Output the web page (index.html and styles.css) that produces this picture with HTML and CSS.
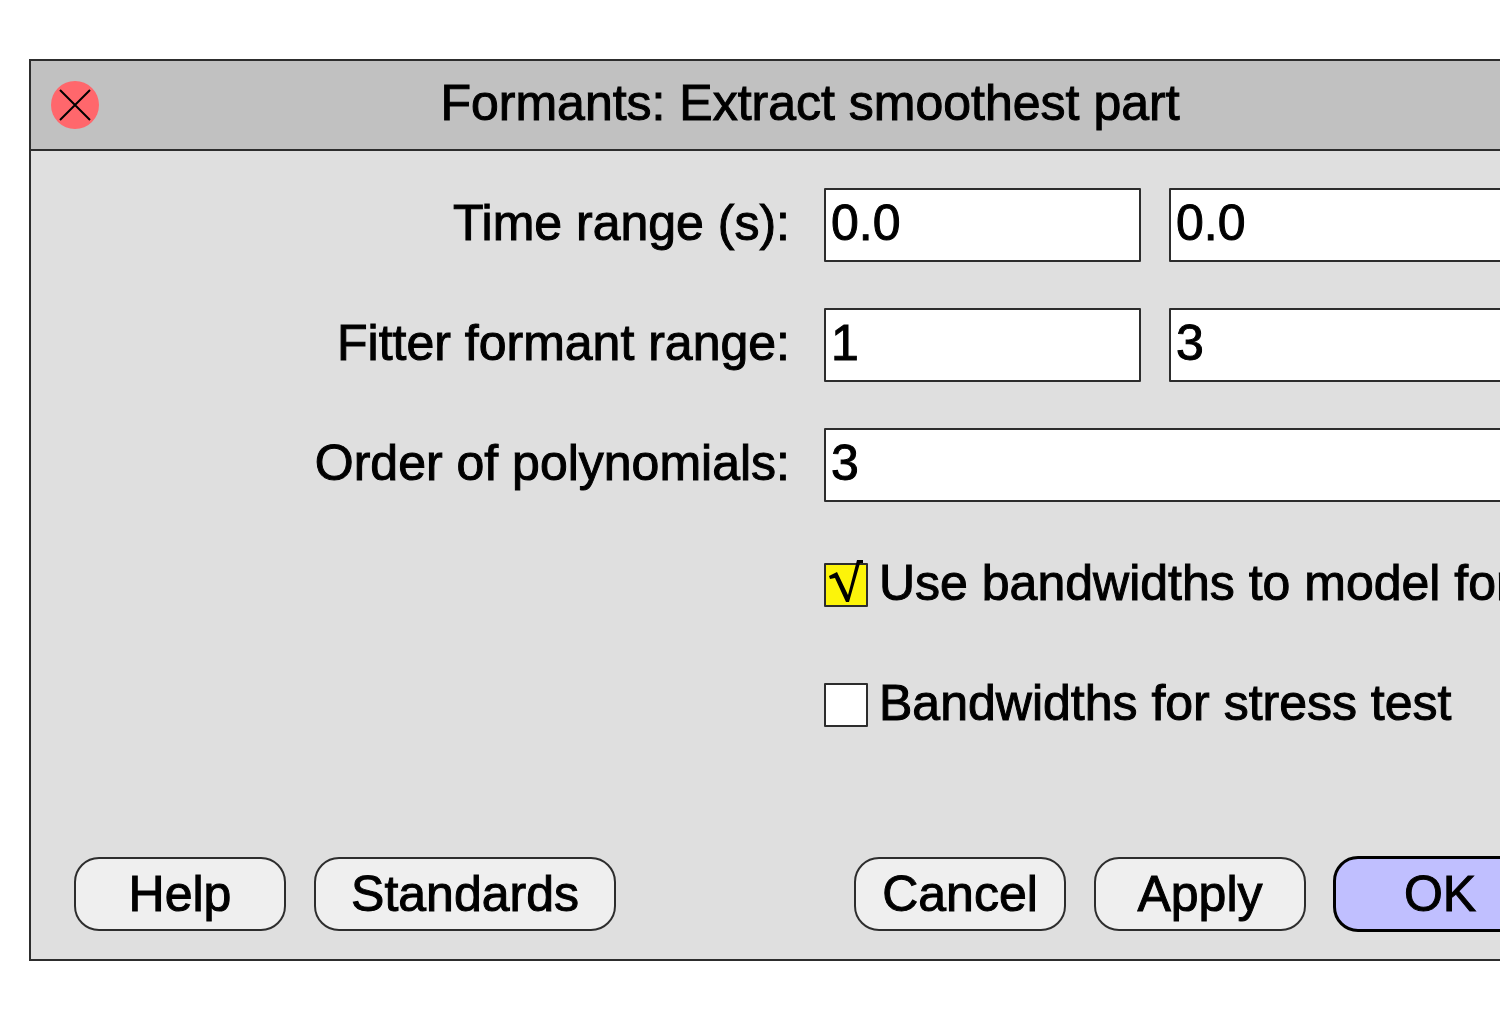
FILE: index.html
```html
<!DOCTYPE html>
<html lang="en">
<head>
<meta charset="utf-8">
<title>Formants: Extract smoothest part</title>
<link rel="stylesheet" href="styles.css">
</head>
<body>
<form class="dialog" aria-labelledby="dialog-title">
  <header class="titlebar">
    <button class="close" type="button" aria-label="Close">
      <svg viewBox="0 0 48 48" aria-hidden="true"><path d="M9 9L39 39M39 9L9 39"/></svg>
    </button>
    <h1 class="title" id="dialog-title">Formants: Extract smoothest part</h1>
  </header>
  <div class="content">
    <div class="fields">
      <label class="label" for="time-from">Time range (s):</label>
      <div class="pair">
        <input class="field" id="time-from" type="text" value="0.0">
        <input class="field" type="text" value="0.0" aria-label="Time range end">
      </div>
      <label class="label" for="formant-from">Fitter formant range:</label>
      <div class="pair">
        <input class="field" id="formant-from" type="text" value="1">
        <input class="field" type="text" value="3" aria-label="Fitter formant range end">
      </div>
      <label class="label" for="order">Order of polynomials:</label>
      <input class="field" id="order" type="text" value="3">
      <div class="option">
        <input class="check" id="use-bandwidths" type="checkbox" checked>
        <label class="option-label" for="use-bandwidths">Use bandwidths to model form</label>
      </div>
      <div class="option">
        <input class="check" id="stress-bandwidths" type="checkbox">
        <label class="option-label" for="stress-bandwidths">Bandwidths for stress test</label>
      </div>
    </div>
    <footer class="actions">
      <button class="button" type="button">Help</button>
      <button class="button button-wide" type="button">Standards</button>
      <button class="button button-first" type="button">Cancel</button>
      <button class="button" type="button">Apply</button>
      <button class="button button-default" type="submit">OK</button>
    </footer>
  </div>
</form>
</body>
</html>
```
FILE: styles.css
```css
* {
  box-sizing: border-box;
}

body {
  margin: 0;
  overflow-x: hidden;
  background: #fff;
  color: #000;
  font: 50px/58px "Liberation Sans", Arial, sans-serif;
  -webkit-text-stroke: 1px #000;
}

button,
input {
  margin: 0;
  color: inherit;
  font: inherit;
}

/* The dialog is wider than the window and runs past its right edge. */
.dialog {
  margin: 59px -91px 59px 29px;
  border: 2px solid #2d2d2d;
  background: #dfdfdf;
}

.titlebar {
  display: grid;
  grid-template-columns: 48px 1fr 48px;
  align-items: center;
  height: 90px;
  padding: 0 20px;
  border-bottom: 2px solid #2d2d2d;
  background: #c1c1c1;
}

.close {
  width: 48px;
  height: 48px;
  padding: 0;
  border: 0;
  border-radius: 50%;
  background: #ff676c;
}

.close svg {
  display: block;
  fill: none;
  stroke: #000;
  stroke-width: 2;
}

.title {
  margin: 0;
  padding-bottom: 4px;
  font-size: 50px;
  font-weight: normal;
  text-align: center;
}

.content {
  padding: 37px 43px 28px;
}

.fields {
  display: grid;
  grid-template-columns: 716px 1fr;
  grid-auto-rows: 74px;
  column-gap: 34px;
  row-gap: 46px;
}

.label {
  padding: 6px 0 10px;
  text-align: right;
}

.pair {
  display: grid;
  grid-template-columns: 317px 1fr;
  gap: 28px;
}

.field {
  width: 100%;
  min-width: 0;
  height: 74px;
  padding: 0 5px 4px;
  border: 2px solid #2d2d2d;
  border-radius: 1px;
  background: #fff;
}

.option {
  display: flex;
  grid-column: 2;
  align-items: center;
  gap: 11px;
}

.option-label {
  padding-bottom: 4px;
  white-space: nowrap;
}

.check {
  position: relative;
  flex: none;
  width: 44px;
  height: 44px;
  border: 2px solid #2d2d2d;
  border-radius: 1px;
  appearance: none;
  background: #fff;
}

.check:checked {
  background: #fcf40a;
}

/* The tick rises above the top edge of its box. */
.check:checked::before {
  content: "";
  position: absolute;
  inset: -6px -2px -2px;
  background: url("data:image/svg+xml,%3Csvg xmlns='http://www.w3.org/2000/svg' viewBox='0 0 44 48'%3E%3Cpath d='M5 17L13 13L24 36L33 1H39V4H36L25 43H22L11 19L6 20Z'/%3E%3C/svg%3E") center / 100% 100% no-repeat;
}

.actions {
  display: flex;
  align-items: center;
  gap: 28px;
  margin-top: 115px;
}

.button {
  width: 212px;
  height: 74px;
  padding: 0;
  border: 2px solid #2d2d2d;
  border-radius: 25px;
  background: #efefef;
}

.button-wide {
  width: 302px;
}

.button-first {
  margin-left: auto;
}

.button-default {
  width: 214px;
  height: 76px;
  margin: -1px;
  border: 3px solid #000;
  background: #c0bfff;
}
```
